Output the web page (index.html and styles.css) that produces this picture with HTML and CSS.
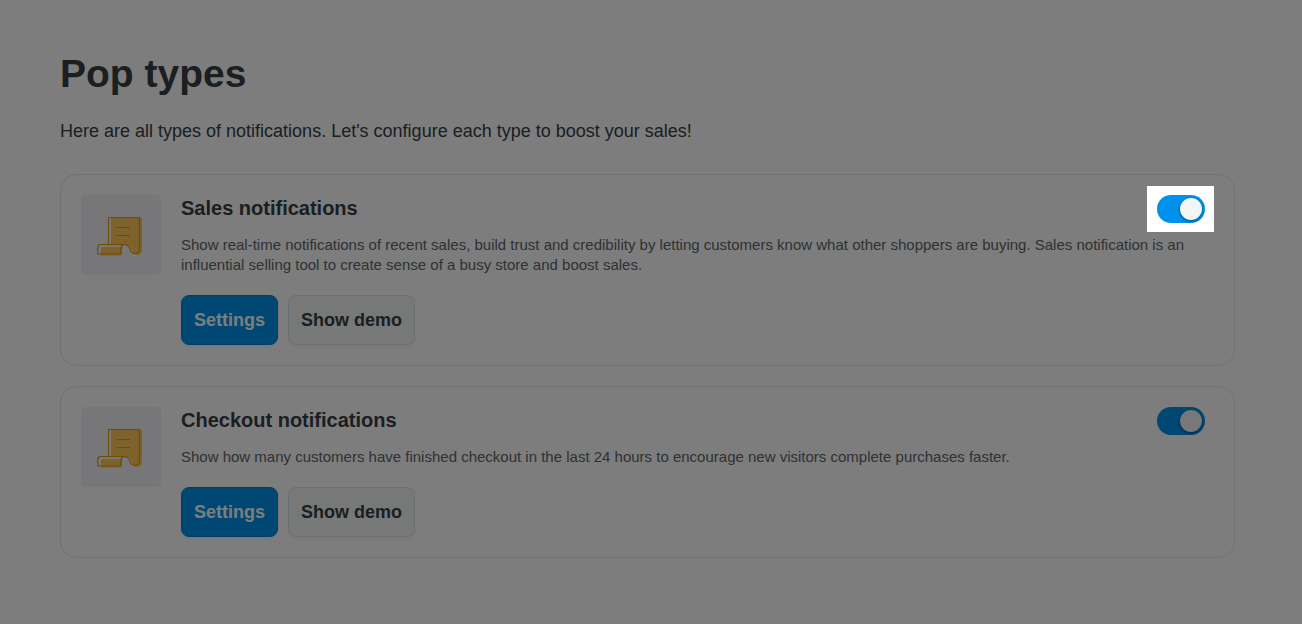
FILE: index.html
```html
<!DOCTYPE html>
<html lang="en">
<head>
<meta charset="utf-8">
<title>Pop types</title>
<link rel="stylesheet" href="styles.css">
</head>
<body>
<svg class="sprite" aria-hidden="true">
  <symbol id="scroll" viewBox="0 0 48 44">
    <path fill="#ffc85a" d="M14 5H45V37Q44.500 42 40 42Q35.500 41 34.500 36Q32.500 32 29 32H14ZM7 34H26Q24.500 36 24.500 42.500H4V37Q4 34 7 34Z"/>
    <path fill="none" stroke="#e59a00" stroke-width="1.200" d="M11.500 31.500V4.500H42.500V36.500Q42 40.500 38 40.500Q33.500 40 33 36Q31.500 32 28 31.500H3Q0.700 32 0.700 35V41H24V35Q24 32 27 31.500M20 14.500H33M20 22.500H33"/>
  </symbol>
</svg>
<main class="page">
  <h1 class="title">Pop types</h1>
  <p class="intro">Here are all types of notifications. Let's configure each type to boost your sales!</p>
  <section class="card">
    <div class="thumb"><svg class="icon" aria-hidden="true"><use href="#scroll"/></svg></div>
    <div class="content">
      <h2 class="name" id="sales">Sales notifications</h2>
      <p class="text">Show real-time notifications of recent sales, build trust and credibility by letting customers know what other shoppers are buying. Sales notification is an influential selling tool to create sense of a busy store and boost sales.</p>
      <div class="actions">
        <button class="btn primary" type="button">Settings</button>
        <button class="btn" type="button">Show demo</button>
      </div>
    </div>
    <label class="switch spotlight"><input class="toggle" type="checkbox" role="switch" aria-labelledby="sales" checked></label>
  </section>
  <section class="card">
    <div class="thumb"><svg class="icon" aria-hidden="true"><use href="#scroll"/></svg></div>
    <div class="content">
      <h2 class="name" id="checkout">Checkout notifications</h2>
      <p class="text">Show how many customers have finished checkout in the last 24 hours to encourage new visitors complete purchases faster.</p>
      <div class="actions">
        <button class="btn primary" type="button">Settings</button>
        <button class="btn" type="button">Show demo</button>
      </div>
    </div>
    <label class="switch"><input class="toggle" type="checkbox" role="switch" aria-labelledby="checkout" checked></label>
  </section>
</main>
</body>
</html>
```
FILE: styles.css
```css
* { box-sizing: border-box; }
body {
  margin: 0;
  background: #fff;
  color: #373f45;
  font-family: "Liberation Sans", Arial, sans-serif;
  overflow-x: hidden;
}
.sprite { display: none; }
.page { padding: 48px 67px 64px 60px; }
.title { margin: 0; font-size: 39px; line-height: 51px; }
.intro { margin: 20px 0 31px; font-size: 18px; line-height: 24px; }
.card {
  display: flex;
  align-items: flex-start;
  gap: 20px;
  margin-bottom: 20px;
  padding: 20px;
  border: 1px solid #e8e8ea;
  border-radius: 16px;
}
.thumb {
  display: grid;
  place-items: center;
  flex: none;
  width: 80px;
  height: 80px;
  border-radius: 4px;
  background: #f3f3f8;
}
.icon { width: 48px; height: 44px; }
.content { flex: 1; min-width: 0; }
.name { margin: 0 0 14px; font-size: 20px; line-height: 26px; }
.text { margin: 0 0 20px; color: #61666a; font-size: 15px; line-height: 20px; }
.actions { display: flex; gap: 10px; }
.btn {
  height: 50px;
  padding: 0 12px;
  border: 1px solid #dde2e4;
  border-radius: 8px;
  background: #f2f6f5;
  box-shadow: 0 2px 4px rgba(0, 0, 0, .05);
  color: #373f45;
  font: bold 18px/24px "Liberation Sans", Arial, sans-serif;
}
.primary { border-color: #0082d8; background: #0091ed; color: #fff; }
.switch { flex: none; margin: -9px 0 -9px -69px; padding: 9px 9px 9px 10px; }
.spotlight {
  position: relative;
  z-index: 10;
  box-shadow: 0 0 0 9999px rgba(0, 0, 0, .51);
}
.toggle {
  display: flex;
  align-items: center;
  justify-content: flex-end;
  appearance: none;
  width: 48px;
  height: 28px;
  margin: 0;
  padding: 0 3px;
  border-radius: 14px;
  background: #0091ed;
}
.toggle::before {
  content: "";
  width: 22px;
  height: 22px;
  border-radius: 50%;
  background: #f3f5f7;
  box-shadow: 0 1px 3px rgba(0, 0, 0, .5);
}
```
